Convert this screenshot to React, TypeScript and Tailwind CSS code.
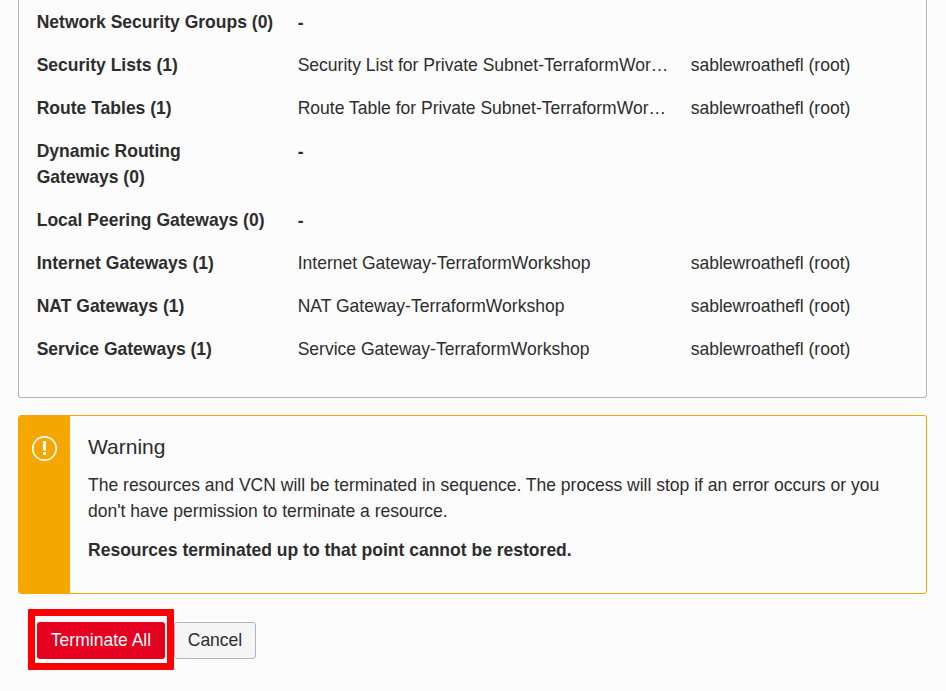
const root = 'sablewroathefl (root)';
const rows = [
  { label: 'Network Security Groups (0)', value: '-' },
  { label: 'Security Lists (1)', value: 'Security List for Private Subnet-TerraformWor…', owner: root },
  { label: 'Route Tables (1)', value: 'Route Table for Private Subnet-TerraformWor…', owner: root },
  { label: 'Dynamic Routing Gateways (0)', value: '-', wrap: true },
  { label: 'Local Peering Gateways (0)', value: '-' },
  { label: 'Internet Gateways (1)', value: 'Internet Gateway-TerraformWorkshop', owner: root },
  { label: 'NAT Gateways (1)', value: 'NAT Gateway-TerraformWorkshop', owner: root },
  { label: 'Service Gateways (1)', value: 'Service Gateway-TerraformWorkshop', owner: root },
];

export default function App() {
  return (
    <div className="flex h-[691px] w-[946px] flex-col overflow-hidden bg-[#fcfcfc] px-[18px] font-['Liberation_Sans',Arial,sans-serif] text-[17.52px] leading-[26px] text-[#2d2d2d]">
      <div className="h-[398px] w-[909px] shrink-0 rounded-b-[3px] border border-t-0 border-[#aeb6c2] pl-[17.7px] pt-[9px]">
        {rows.map((r) => (
          <div key={r.label} className="mb-[17px] flex">
            <div className="w-[261px] shrink-0 font-bold">
              <div className={r.wrap ? 'w-[200px]' : 'whitespace-nowrap'}>{r.label}</div>
            </div>
            <div className={r.value === '-' ? 'h-[26px] w-[393px] shrink-0 pt-px font-bold leading-[26px]' : 'w-[393px] shrink-0 whitespace-nowrap'}>{r.value}</div>
            <div className="whitespace-nowrap">{r.owner}</div>
          </div>
        ))}
      </div>
      <div className="mt-[17px] flex h-[179px] w-[909px] shrink-0 overflow-hidden rounded-[3px] border border-[#f5a700]">
        <div className="w-[51px] shrink-0 bg-[#f5a700] pl-[12px] pt-[19px]">
          <svg width="27" height="27" viewBox="0 0 27 27" fill="none" stroke="white">
            <circle cx="13.5" cy="13.5" r="11.7" strokeWidth="1.7" />
            <path d="M13.5 6v9.5M13.5 17v3" strokeWidth="3" />
          </svg>
        </div>
        <div className="pl-[18px] pt-[18px]">
          <h2 className="text-[21px]">Warning</h2>
          <p className="mt-[12px] w-[810px]">
            The resources and VCN will be terminated in sequence. The process will stop if an error occurs or you<br />don't have permission to terminate a resource.
          </p>
          <p className="mt-[13px] font-bold">Resources terminated up to that point cannot be restored.</p>
        </div>
      </div>
      <div className="ml-[10px] mt-[15px] flex items-start">
        <div className="flex h-[61px] w-[146px] items-start rounded-[1px] border-[7px] border-[#ff0000] pl-[2px] pt-[6px]">
          <button className="h-[37px] w-[128px] rounded-[3px] bg-[#e5001f] pb-[2px] text-white">Terminate All</button>
        </div>
        <button className="mt-[13px] h-[37px] w-[82px] rounded-[3px] border border-[#aeb6c2] bg-[#f5f5f5] pb-[2px]">Cancel</button>
      </div>
    </div>
  );
}
